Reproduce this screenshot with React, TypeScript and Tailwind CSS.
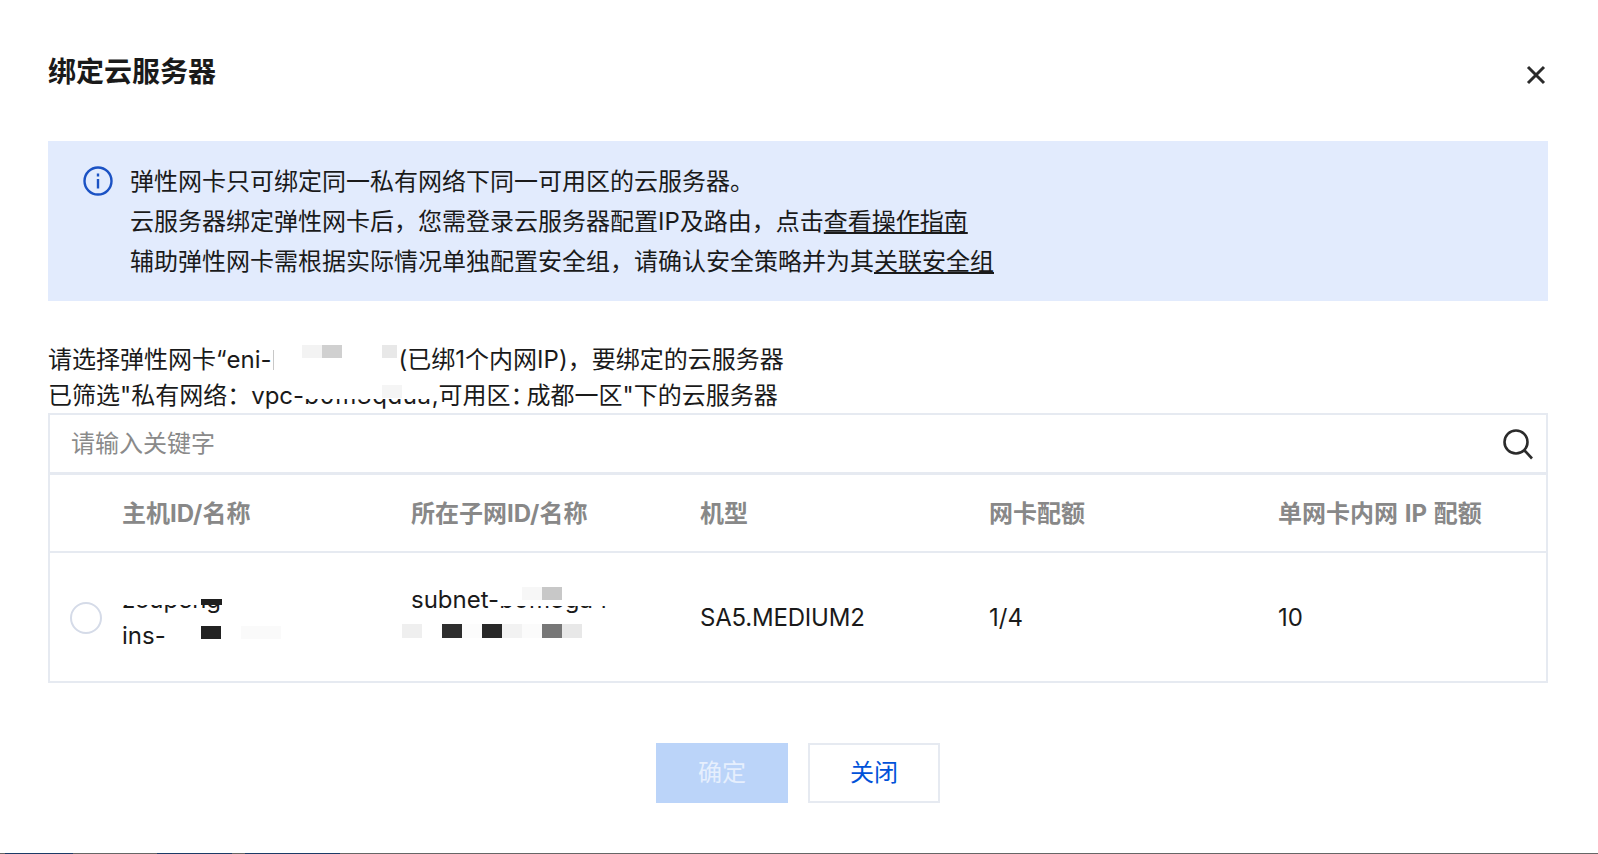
const font = "font-['Inter','Noto_Sans_CJK_SC',sans-serif]";

function Block({ className }: { className: string }) {
  return <span className={`absolute ${className}`} />;
}

export default function App() {
  return (
    <div className={`${font} h-[854px] overflow-hidden bg-white text-[24px] text-[#1a1a1a] flex flex-col relative`}>
      <div className="pl-[48px] pr-[50px] pt-[52px] flex-1">
        <div className="flex justify-between">
          <h1 className="text-[28px] leading-[40px] font-bold text-[#1a1a1a]">绑定云服务器</h1>
          <button className="mt-[12px] mr-[1px] h-[22px] w-[22px] flex items-center justify-center text-[#2b2b2b]">
            <svg width="22" height="22" viewBox="0 0 22 22" fill="none" stroke="currentColor" strokeWidth="3">
              <path d="M3 3l16 16M19 3L3 19" />
            </svg>
          </button>
        </div>

        <div className="mt-[49px] h-[160px] bg-[#e2ebfd] pt-[21px] pl-[35px] flex gap-[17px] leading-[40px]">
          <svg className="mt-[4px] shrink-0" width="30" height="30" viewBox="0 0 30 30" fill="none" stroke="#1b52c4" strokeWidth="2.4">
            <circle cx="15" cy="15" r="13.5" />
            <path d="M15 13v9.5" />
            <path d="M15 7.5v3" />
          </svg>
          <div>
            <p>弹性网卡只可绑定同一私有网络下同一可用区的云服务器。</p>
            <p>
              云服务器绑定弹性网卡后，您需登录云服务器配置IP及路由，点击<span className="underline">查看操作指南</span>
            </p>
            <p>
              辅助弹性网卡需根据实际情况单独配置安全组，请确认安全策略并为其<span className="underline">关联安全组</span>
            </p>
          </div>
        </div>

        <div className="mt-[41px] leading-[36px] relative">
          <p className="flex">
            请选择弹性网卡“eni-
            <span className="relative w-[127px] shrink-0">
              <Block className="left-[1px] top-[8px] w-px h-[20px] bg-[#c8c8c8]" />
              <Block className="left-[30px] top-[3px] w-[20px] h-[13px] bg-[#f3f3f3]" />
              <Block className="left-[50px] top-[3px] w-[20px] h-[13px] bg-[#d0d0d0]" />
              <Block className="left-[110px] top-[3px] w-[15px] h-[13px] bg-[#e8e8e8]" />
            </span>
            (已绑1个内网IP)，要绑定的云服务器
          </p>
          <p className="flex">
            已筛选"私有网络：vpc-
            <span className="relative tracking-[0.6px]">
              b0m3qdua
              <Block className="left-0 right-0 top-[2px] h-[19px] bg-white" />
              <Block className="left-[78px] top-[7px] w-[20px] h-[13px] bg-[#f5f5f5]" />
            </span>
            <span className="-mr-[8px]">,可用区：</span>
            成都一区"下的云服务器
          </p>
        </div>

        <div className="-mt-px border-2 border-[#e6eaf1]">
          <div className="h-[57px] border-b-[3px] border-[#e6eaf1] box-content flex items-center justify-between pl-[21px] pr-[12px] -mb-px">
            <span className="text-[#8a8a8a]">请输入关键字</span>
            <svg width="32" height="32" viewBox="0 0 32 32" fill="none" stroke="#2b2b2b" strokeWidth="2.6">
              <circle cx="14" cy="14" r="11.5" />
              <path d="M22.5 22.5l7.5 8" />
            </svg>
          </div>
          <div className="grid grid-cols-[72px_289px_289px_289px_289px_1fr] h-[75px] pt-[2px] items-center font-bold text-[#888888] border-b-2 border-[#e6eaf1] box-content">
            <span />
            <span>主机ID/名称</span>
            <span>所在子网ID/名称</span>
            <span>机型</span>
            <span>网卡配额</span>
            <span className="[word-spacing:1px]">单网卡内网 IP 配额</span>
          </div>
          <div className="grid grid-cols-[72px_289px_289px_289px_289px_1fr] h-[128px] pt-[2px] items-center">
            <span className="ml-[20px] w-[32px] h-[32px] rounded-full border-2 border-[#d5dbe8]" />
            <div className="leading-[36px]">
              <p className="relative">
                zoupeng
                <Block className="left-0 w-[100px] top-[1px] h-[22px] bg-white" />
                <Block className="left-[79px] top-[17px] w-[21px] h-[6px] bg-[#1f1f1f]" />
              </p>
              <p className="relative">
                ins-
                <Block className="left-[79px] top-[8px] w-[20px] h-[13px] bg-[#222222]" />
                <Block className="left-[119px] top-[8px] w-[40px] h-[13px] bg-[#fafafa]" />
              </p>
            </div>
            <div className="leading-[36px]">
              <p className="relative">
                subnet-
                <span className="relative">
                  b0m3ga4
                  <Block className="left-0 right-0 top-[1px] h-[20px] bg-white" />
                </span>
                <Block className="left-[111px] top-[5px] w-[20px] h-[13px] bg-[#f7f7f7]" />
                <Block className="left-[131px] top-[5px] w-[20px] h-[13px] bg-[#c8c8c8]" />
              </p>
              <div className="relative h-[36px]">
                <Block className="left-[-9px] top-[6px] w-[20px] h-[14px] bg-[#efefef]" />
                <Block className="left-[31px] top-[6px] w-[20px] h-[14px] bg-[#2e2e2e]" />
                <Block className="left-[51px] top-[6px] w-[20px] h-[14px] bg-[#fcfcfc]" />
                <Block className="left-[71px] top-[6px] w-[20px] h-[14px] bg-[#282828]" />
                <Block className="left-[91px] top-[6px] w-[20px] h-[14px] bg-[#f2f2f2]" />
                <Block className="left-[111px] top-[6px] w-[20px] h-[14px] bg-[#fbfbfb]" />
                <Block className="left-[131px] top-[6px] w-[20px] h-[14px] bg-[#777777]" />
                <Block className="left-[151px] top-[6px] w-[20px] h-[14px] bg-[#e8e8e8]" />
              </div>
            </div>
            <span className="tracking-[-0.2px]">SA5.MEDIUM2</span>
            <span>1/4</span>
            <span>10</span>
          </div>
        </div>

        <div className="mt-[60px] flex justify-center gap-[20px]">
          <button className="w-[132px] h-[60px] bg-[#bbd4f9] text-[#e6effd]">确定</button>
          <button className="w-[132px] h-[60px] border-2 border-[#e6eaf1] text-[#0052d9]">关闭</button>
        </div>
      </div>

      <div className="h-px bg-[#666666] flex shrink-0">
        <span className="ml-[5px] w-[68px] bg-[#1c3a66]" />
        <span className="ml-[84px] w-[75px] bg-[#1c3a66]" />
        <span className="ml-[13px] w-[95px] bg-[#1c3a66]" />
      </div>
    </div>
  );
}
